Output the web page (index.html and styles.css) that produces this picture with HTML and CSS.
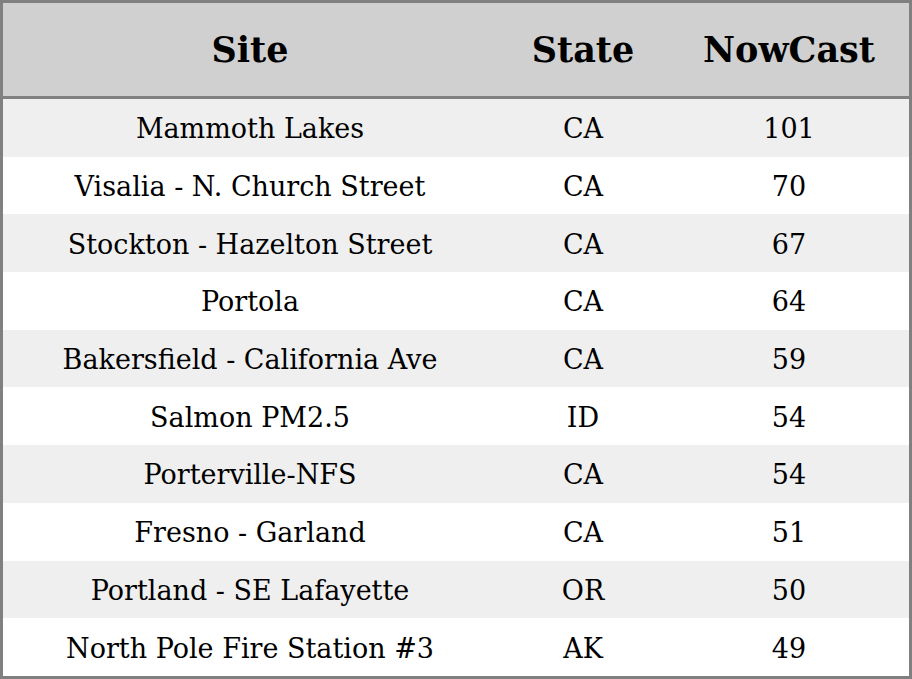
FILE: index.html
```html
<!DOCTYPE html>
<html>
<head>
<meta charset="utf-8">
<link rel="stylesheet" href="styles.css">
</head>
<body>
<table class="aq">
<thead>
<tr><th class="c-site">Site</th><th class="c-state">State</th><th class="c-now">NowCast</th></tr>
</thead>
<tbody>
<tr><td>Mammoth Lakes</td><td>CA</td><td>101</td></tr>
<tr><td>Visalia - N. Church Street</td><td>CA</td><td>70</td></tr>
<tr><td>Stockton - Hazelton Street</td><td>CA</td><td>67</td></tr>
<tr><td>Portola</td><td>CA</td><td>64</td></tr>
<tr><td>Bakersfield - California Ave</td><td>CA</td><td>59</td></tr>
<tr><td>Salmon PM2.5</td><td>ID</td><td>54</td></tr>
<tr><td>Porterville-NFS</td><td>CA</td><td>54</td></tr>
<tr><td>Fresno - Garland</td><td>CA</td><td>51</td></tr>
<tr><td>Portland - SE Lafayette</td><td>OR</td><td>50</td></tr>
<tr><td>North Pole Fire Station #3</td><td>AK</td><td>49</td></tr>
</tbody>
</table>
</body>
</html>
```
FILE: styles.css
```css
html, body {
  margin: 0;
  padding: 0;
  background: #ffffff;
}
.aq {
  width: 912px;
  border-collapse: separate;
  border-spacing: 0;
  border: 3px solid #808080;
  font-family: "DejaVu Serif", serif;
  color: #000;
}
.aq th {
  height: 93px;
  padding: 0;
  background: #d0d0d0;
  border-bottom: 3px solid #808080;
  font-size: 35px;
  font-weight: bold;
  text-align: center;
}
.c-site { width: 494px; }
.c-state { width: 172px; }
.c-now { width: 240px; }
.aq td {
  height: 55.7px;
  padding: 2px 0 0 0;
  font-size: 27px;
  text-align: center;
}
.aq tbody tr:nth-child(odd) td {
  background: #efefef;
}
```
